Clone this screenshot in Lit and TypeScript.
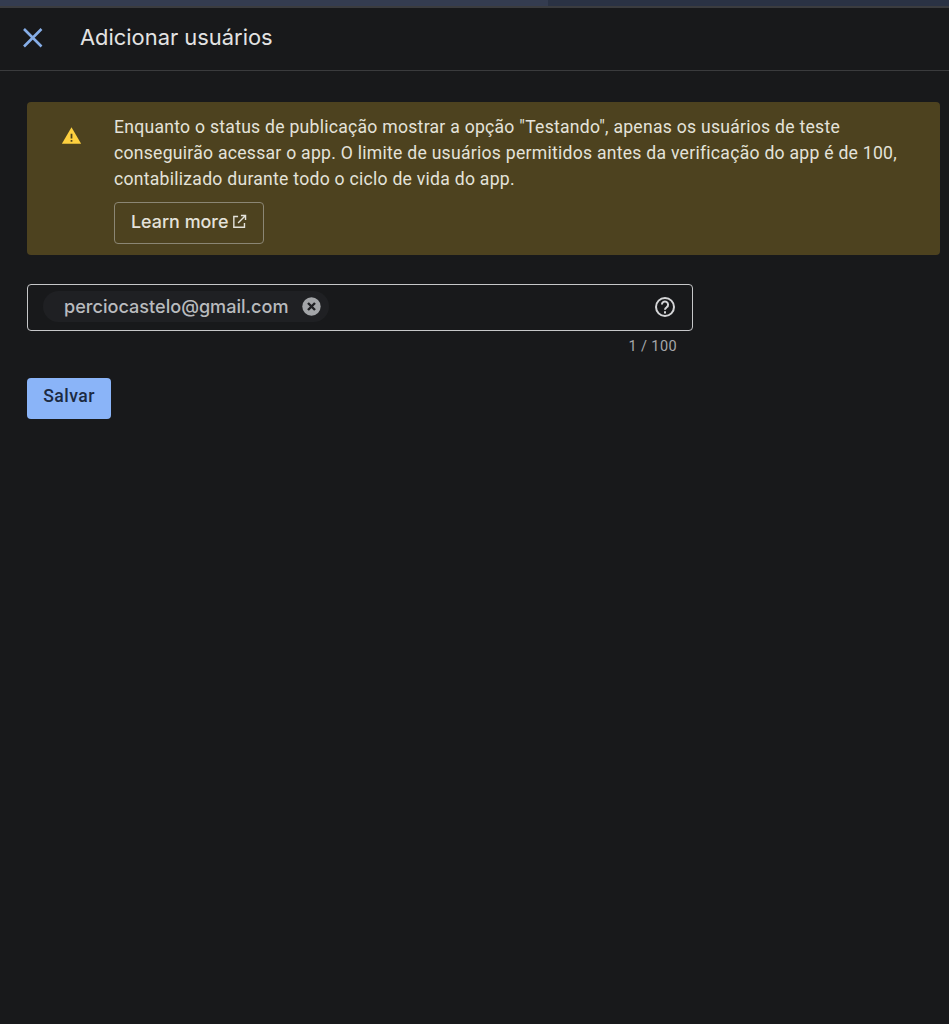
import { LitElement, html, css } from "lit";
import { customElement } from "lit/decorators.js";

@customElement("app-root")
export class AppRoot extends LitElement {
  static styles = css`
    :host { display: flex; flex-direction: column; width: 949px; height: 1024px; background: #18191b; font-family: Roboto, sans-serif; overflow: hidden; }
    .chrome { display: flex; height: 6px; background: #2a3244; }
    .chrome-left { width: 548px; background: #343c50; }
    .chrome-line { height: 2px; background: #3b3c3f; }
    .head { display: flex; align-items: center; box-sizing: border-box; border-bottom: 1px solid #3a3b3d; padding: 0 0 4px 21px; height: 63px; }
    .close { width: 23px; height: 23px; display: block; }
    h1 { margin: 0 0 0 36px; font: 400 21.9px/28px Inter, "Open Sans", sans-serif; color: #e3e3e3; }
    main { display: flex; flex-direction: column; align-items: flex-start; padding: 31px 9px 0 27px; }
    .alert { display: flex; width: 100%; box-sizing: border-box; height: 153px; background: #4d421f; border-radius: 4px; padding: 12px 16px 0 34px; }
    .warn { width: 21px; height: 21px; margin-top: 11px; flex: none; display: block; }
    .alert-body { margin-left: 32px; }
    p { margin: 0; font: 400 17.6px/26px Roboto, sans-serif; letter-spacing: .26px; color: #e4e2da; }
    .learn { display: inline-flex; align-items: center; gap: 3px; height: 42px; width: 150px; box-sizing: border-box; margin-top: 10px; padding: 0 0 3px 16px; border: 1px solid #8b8674; border-radius: 4px; background: none; color: #e4e2da; font: 500 17.9px/20px Inter, sans-serif; }
    .learn svg { width: 17px; height: 17px; display: block; }
    .field { display: flex; align-items: center; justify-content: space-between; width: 666px; height: 47px; box-sizing: border-box; margin-top: 29px; padding: 0 15px 2px 15px; border: 1px solid #c6c7c9; border-radius: 4px; }
    .chip { display: flex; align-items: center; height: 31px; padding: 0 7px 0 21px; border-radius: 16px; background: #1f2023; color: #b9bbbe; font: 500 18.1px/20px Inter, sans-serif; }
    .chip-text { margin-top: -2px; }
    .chip svg { width: 21px; height: 21px; margin-left: 12px; display: block; }
    .help { width: 24px; height: 24px; display: block; }
    .count { width: 650px; margin-top: 7px; text-align: right; font: 400 14.5px/18px Roboto, sans-serif; letter-spacing: .4px; color: #a6a7aa; }
    .save { width: 84px; height: 41px; margin-top: 22px; padding: 0 0 6px; border: 0; border-radius: 4px; background: #8ab4f8; color: #1c2a42; font: 500 17.6px/20px Roboto, sans-serif; letter-spacing: .45px; }
  `;

  render() {
    return html`
      <div class="chrome"><div class="chrome-left"></div></div>
      <div class="chrome-line"></div>
      <header class="head">
        <svg class="close" viewBox="0 0 23 23" fill="none" stroke="#86aee8" stroke-width="2.6"><path d="M3 3l17.5 17.5M20.5 3L3 20.5"/></svg>
        <h1>Adicionar usuários</h1>
      </header>
      <main>
        <section class="alert">
          <svg class="warn" viewBox="0 0 24 24"><path fill="#fdd03f" d="M1 21.5L12 2.5l11 19z"/><path fill="#4d421f" d="M11 10h2v5.5h-2zM11 17h2v2h-2z"/></svg>
          <div class="alert-body">
            <p>Enquanto o status de publicação mostrar a opção "Testando", apenas os usuários de teste<br>conseguirão acessar o app. O limite de usuários permitidos antes da verificação do app é de 100,<br>contabilizado durante todo o ciclo de vida do app.</p>
            <button class="learn">Learn more
              <svg viewBox="0 0 24 24" fill="none" stroke="#e4e2da" stroke-width="2"><path d="M19 14v6H4V5h6"/><path d="M14 3.5h6.5V10M20.5 3.5L10 14"/></svg>
            </button>
          </div>
        </section>
        <div class="field">
          <div class="chip"><span class="chip-text">perciocastelo@gmail.com</span>
            <svg viewBox="0 0 24 24"><circle cx="12" cy="12" r="10.5" fill="#a3a5a8"/><path d="M8 8l8 8M16 8l-8 8" stroke="#1f2023" stroke-width="2.8"/></svg>
          </div>
          <svg class="help" viewBox="0 0 24 24" fill="none" stroke="#d4d5d7" stroke-width="2"><circle cx="12" cy="12" r="9"/><path d="M8.9 9.6a3.1 3.1 0 1 1 4.8 2.6c-1.1.8-1.7 1.3-1.7 2.6"/><path d="M12 16.3v2.1"/></svg>
        </div>
        <div class="count">1 / 100</div>
        <button class="save">Salvar</button>
      </main>
    `;
  }
}
